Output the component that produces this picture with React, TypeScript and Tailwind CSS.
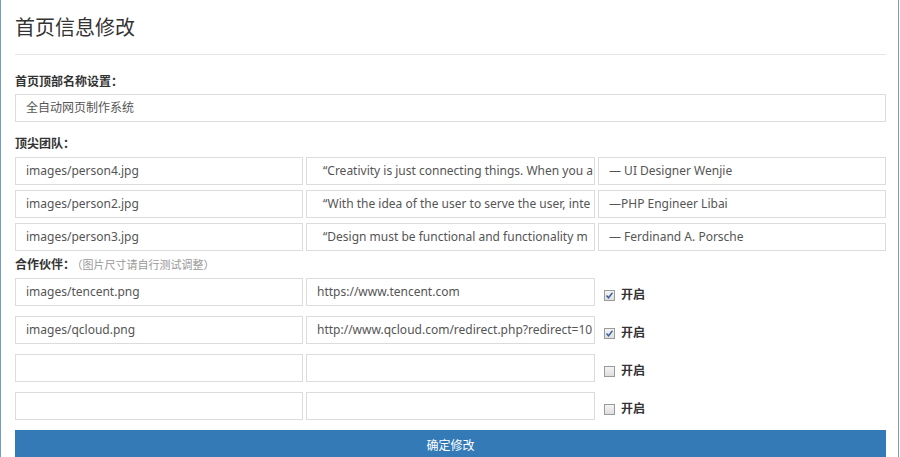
import React from "react";

const font = { fontFamily: '"Noto Sans", "Noto Sans CJK SC", sans-serif' };

function Box({ value, className = "" }: { value: string; className?: string }) {
  return (
    <div
      className={
        "h-[28px] border border-[#dcdcdc] bg-white pl-[10px] flex items-center overflow-hidden whitespace-nowrap text-[12px] text-[#555] " +
        className
      }
    >
      {value}
    </div>
  );
}

function Check({ checked }: { checked: boolean }) {
  return (
    <div className="flex items-center gap-[6px] pl-[9px] pt-[6px] self-center">
      <div className="w-[11px] h-[11px] border border-[#9a9a9a] bg-gradient-to-b from-[#f4f4f4] to-[#dedede] flex items-center justify-center">
        {checked && (
          <svg width="9" height="9" viewBox="0 0 9 9">
            <path d="M1.5 4.5 L3.5 6.8 L7.5 1.8" stroke="#3a5f9e" strokeWidth="1.4" fill="none" />
          </svg>
        )}
      </div>
      <span className="text-[12px] font-bold text-[#333]">开启</span>
    </div>
  );
}

export default function App() {
  const team = [
    ["images/person4.jpg", "“Creativity is just connecting things. When you a", "— UI Designer Wenjie"],
    ["images/person2.jpg", "“With the idea of the user to serve the user, inte", "—PHP Engineer Libai"],
    ["images/person3.jpg", "“Design must be functional and functionality m", "— Ferdinand A. Porsche"],
  ];
  const partners: [string, string, boolean][] = [
    ["images/tencent.png", "https://www.tencent.com", true],
    ["images/qcloud.png", "http://www.qcloud.com/redirect.php?redirect=10", true],
    ["", "", false],
    ["", "", false],
  ];
  return (
    <div style={font} className="w-[899px] h-[457px] overflow-hidden bg-white border-l border-r border-[#6f9cc9] text-[#333]">
      <div className="pl-[14px] pr-[12px]">
        <h1 className="text-[20px] leading-none pt-[18px] pb-[16px] border-b border-[#e6e6e6] text-[#333]">首页信息修改</h1>
        <div className="text-[12px] font-bold pt-[21px] leading-none">首页顶部名称设置：</div>
        <Box value="全自动网页制作系统" className="mt-[6px]" />
        <div className="text-[12px] font-bold pt-[16px] leading-none">顶尖团队：</div>
        <div className="flex flex-col gap-[5px] mt-[7px]">
          {team.map((r, i) => (
            <div key={i} className="grid grid-cols-[288px_289px_288px] gap-[3px]">
              <Box value={r[0]} />
              <Box value={r[1]} className="pl-[16px]" />
              <Box value={r[2]} />
            </div>
          ))}
        </div>
        <div className="text-[12px] pt-[8px] leading-none">
          <span className="font-bold">合作伙伴：</span>
          <span className="text-[#999] text-[11px] ml-[2px]">（图片尺寸请自行测试调整）</span>
        </div>
        <div className="flex flex-col gap-[10px] mt-[7px]">
          {partners.map((r, i) => (
            <div key={i} className="flex">
              <Box value={r[0]} className="w-[288px]" />
              <Box value={r[1]} className="w-[289px] ml-[3px]" />
              <Check checked={r[2]} />
            </div>
          ))}
        </div>
        <button className="mt-[10px] w-full h-[32px] bg-[#337ab7] text-white text-[12px] flex items-center justify-center">
          确定修改
        </button>
      </div>
    </div>
  );
}
